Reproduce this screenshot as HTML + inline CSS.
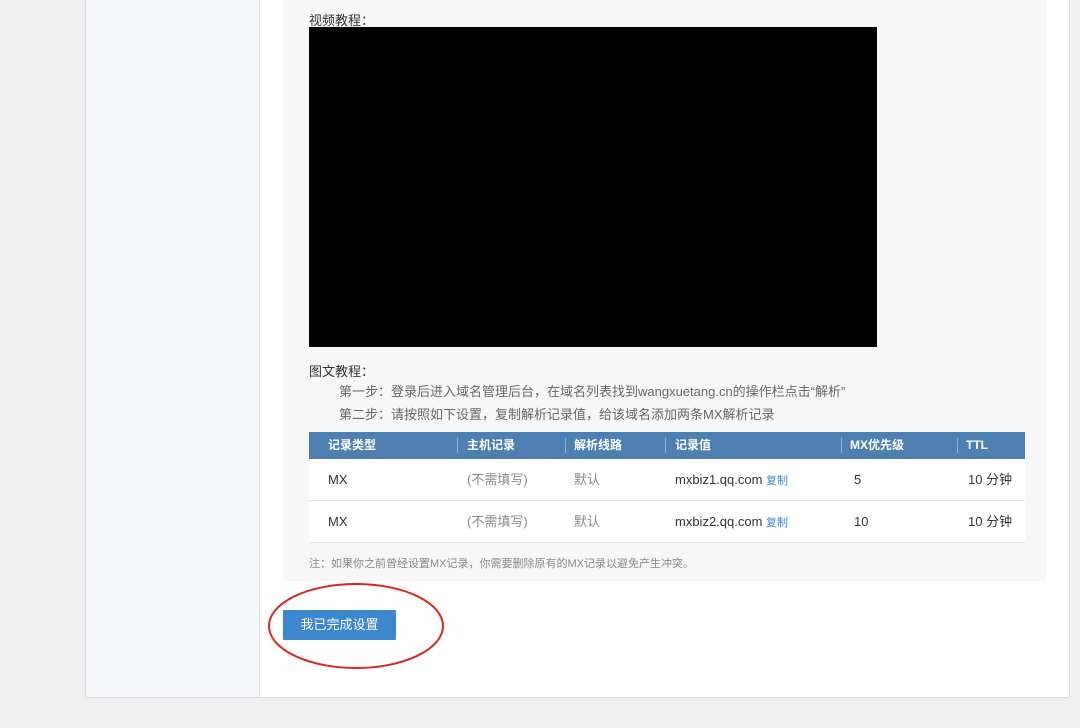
<!DOCTYPE html><html><head><meta charset="utf-8"><style>
body{margin:0;width:1080px;height:728px;background:#efefef;font-family:"Liberation Sans","Noto Sans CJK SC",sans-serif;position:relative;overflow:hidden}
.panel{position:absolute;left:85px;top:-2px;width:983px;height:698px;background:#fff;border:1px solid #dcdcdc;border-radius:2px}
.side{position:absolute;left:86px;top:0;width:173px;height:697px;background:#f4f6f9;border-right:1px solid #e2e5ea}
.box{position:absolute;left:283px;top:0;width:763px;height:581px;background:#f7f7f7}
.t{position:absolute;font-size:13px;color:#333;white-space:nowrap}
.g{color:#666}
.video{position:absolute;left:309px;top:27px;width:568px;height:320px;background:#000}
.tbl{position:absolute;left:309px;top:432px;width:716px}
.hd{height:27px;background:#4d7fb0;position:relative}
.hd span{position:absolute;top:0;line-height:27px;height:27px;color:#fff;font-size:12px;font-weight:bold}
.hd i{position:absolute;top:6px;width:1px;height:15px;background:#8fb0d0}
.row{height:41px;background:#fff;border-bottom:1px solid #e6e6e6;position:relative}
.row span{position:absolute;top:0;height:41px;line-height:41px;font-size:13px;color:#333}
.row .gr{color:#888}
.btn{position:absolute;left:283px;top:610px;width:113px;height:30px;background:#3d87cf;color:#fff;font-size:13px;line-height:30px;text-align:center;border-radius:1px}
</style></head><body>
<div class="panel"></div><div class="side"></div>
<div class="box"></div>
<div class="t" style="left:309px;top:10px">视频教程：</div>
<div class="video"></div>
<div class="t" style="left:309px;top:361px">图文教程：</div>
<div class="t g" style="left:339px;top:381px">第一步：登录后进入域名管理后台，在域名列表找到wangxuetang.cn的操作栏点击“解析”</div>
<div class="t g" style="left:339px;top:404px">第二步：请按照如下设置，复制解析记录值，给该域名添加两条MX解析记录</div>
<div class="tbl">
<div class="hd"><span style="left:19px">记录类型</span><i style="left:148px"></i><span style="left:158px">主机记录</span><i style="left:256px"></i><span style="left:265px">解析线路</span><i style="left:356px"></i><span style="left:366px">记录值</span><i style="left:532px"></i><span style="left:541px">MX优先级</span><i style="left:648px"></i><span style="left:657px">TTL</span></div>
<div class="row"><span style="left:19px">MX</span><span class="gr" style="left:158px">(不需填写)</span><span class="gr" style="left:265px">默认</span><span style="left:366px">mxbiz1.qq.com <b style="font-weight:normal;color:#3d87cf;font-size:11px">复制</b></span><span style="left:545px">5</span><span style="left:659px">10 分钟</span></div>
<div class="row"><span style="left:19px">MX</span><span class="gr" style="left:158px">(不需填写)</span><span class="gr" style="left:265px">默认</span><span style="left:366px">mxbiz2.qq.com <b style="font-weight:normal;color:#3d87cf;font-size:11px">复制</b></span><span style="left:545px">10</span><span style="left:659px">10 分钟</span></div>
</div>
<div class="t" style="left:309px;top:555px;font-size:11px;color:#888">注：如果你之前曾经设置MX记录，你需要删除原有的MX记录以避免产生冲突。</div>
<div class="btn">我已完成设置</div>
<svg style="position:absolute;left:0;top:0" width="1080" height="728"><ellipse cx="356" cy="626" rx="87" ry="42" fill="none" stroke="#d42a22" stroke-width="2"/></svg>
</body></html>
